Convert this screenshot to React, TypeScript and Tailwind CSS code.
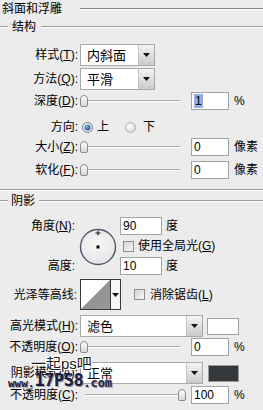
import React from "react";

const U = ({ c }: { c: string }) => <span className="underline underline-offset-[1px]">{c}</span>;

function Label({ children, w = "w-[78px]" }: { children: React.ReactNode; w?: string }) {
  return <div className={`${w} shrink-0 text-right whitespace-nowrap`}>{children}</div>;
}

function Line({ className = "" }: { className?: string }) {
  return <div className={`h-[2px] border-t border-t-[#9a9a9a] border-b border-b-white ${className}`} />;
}

function Arrow() {
  return (
    <svg width="7" height="4" viewBox="0 0 7 4">
      <polygon points="0,0 7,0 3.5,4" fill="#111" />
    </svg>
  );
}

function Select({ w, text }: { w: string; text: string }) {
  return (
    <div className={`flex h-[22px] ${w} bg-white border border-[#a9a9a9]`}>
      <div className="flex-1 flex items-center pl-[6px] text-[13px]">{text}</div>
      <div className="w-[16px] border-l border-l-[#c4c4c4] bg-gradient-to-b from-[#f4f4f4] to-[#cbcbcb] flex items-center justify-center">
        <Arrow />
      </div>
    </div>
  );
}

function Input({ value, w = "w-[38px]", sel = false }: { value: string; w?: string; sel?: boolean }) {
  return (
    <div className={`h-[18px] ${w} bg-white border border-[#a3a3a3] flex items-center pl-[2px] font-['Liberation_Sans',sans-serif] text-[12px]`}>
      {sel ? <span className="bg-[#8fb0e0] px-[1px] leading-[14px]">{value}</span> : <span>{value}</span>}
    </div>
  );
}

function Slider({ left }: { left: number }) {
  return (
    <div className="relative w-[106px] h-[18px] shrink-0">
      <div className="absolute left-[5px] right-[6px] top-[8px] h-[2px] border-t border-t-[#a8a8a8] border-b border-b-white" />
      <div
        className="absolute top-[3px] w-[8px] h-[12px] rounded-t-[4px] rounded-b-[2px] border border-[#8c8c8c] bg-gradient-to-b from-white to-[#d8d8d8]"
        style={{ left }}
      />
    </div>
  );
}

function Radio({ on }: { on: boolean }) {
  return (
    <svg width="11" height="11" viewBox="0 0 11 11">
      <defs>
        <radialGradient id={on ? "rgOn" : "rgOff"} cx="0.4" cy="0.35" r="0.7">
          <stop offset="0" stopColor="#fff" />
          <stop offset="1" stopColor={on ? "#d9d9d9" : "#d4d4d4"} />
        </radialGradient>
        <radialGradient id="rgDot" cx="0.4" cy="0.35" r="0.7">
          <stop offset="0" stopColor="#7fb2e3" />
          <stop offset="1" stopColor="#1d4f86" />
        </radialGradient>
      </defs>
      <circle cx="5.5" cy="5.5" r="5" fill={`url(#${on ? "rgOn" : "rgOff"})`} stroke={on ? "#6f7f8f" : "#b0b0b0"} strokeWidth="1" />
      {on && <circle cx="5.5" cy="5.5" r="3" fill="url(#rgDot)" />}
    </svg>
  );
}

function Checkbox() {
  return <div className="w-[11px] h-[11px] border border-[#8e8e8e] bg-gradient-to-br from-[#d6d6d6] to-[#f6f6f6] shrink-0" />;
}

function Dial() {
  return (
    <svg width="38" height="38" viewBox="0 0 38 38">
      <defs>
        <radialGradient id="dialG" cx="0.45" cy="0.4" r="0.65">
          <stop offset="0" stopColor="#f8f8f8" />
          <stop offset="1" stopColor="#e4e4e4" />
        </radialGradient>
      </defs>
      <circle cx="19" cy="19" r="17.5" fill="url(#dialG)" stroke="#4d566c" strokeWidth="1.4" />
      <line x1="19" y1="2.5" x2="19" y2="7.5" stroke="#111" strokeWidth="1" />
      <line x1="16.5" y1="5" x2="21.5" y2="5" stroke="#111" strokeWidth="1" />
      <rect x="17.5" y="17.5" width="3" height="3" fill="#000" />
    </svg>
  );
}

function Contour() {
  return (
    <div className="flex h-[31px] w-[41px] border border-[#3a3a3a] bg-white">
      <svg width="29" height="29" viewBox="0 0 29 29" className="shrink-0">
        <defs>
          <linearGradient id="ctG" x1="0" y1="0" x2="1" y2="1">
            <stop offset="0" stopColor="#8a8a8a" />
            <stop offset="1" stopColor="#9a9a9a" />
          </linearGradient>
        </defs>
        <rect width="29" height="29" fill="#fff" />
        <polygon points="0,29 29,0 29,29" fill="url(#ctG)" />
      </svg>
      <div className="flex-1 border-l border-l-[#3a3a3a] flex items-center justify-center bg-[#f7f7f7]">
        <Arrow />
      </div>
    </div>
  );
}

export default function App() {
  return (
    <div className="w-[263px] h-[410px] overflow-hidden bg-[#ececec] text-black text-[12px] leading-none font-['Liberation_Sans','Noto_Sans_CJK_SC',sans-serif] flex flex-col">
      {/* title */}
      <div className="h-[18px] flex items-center shrink-0">
        <span className="ml-[2px] text-[12px]">斜面和浮雕</span>
        <div className="flex-1 ml-[18px] h-[2px] border-t border-t-[#858585] border-b border-b-white" />
      </div>

      {/* 结构 header */}
      <div className="mt-[1px] h-[16px] flex items-center shrink-0">
        <Line className="w-[8px]" />
        <span className="ml-[4px]">结构</span>
        <Line className="flex-1 ml-[5px]" />
      </div>

      <div className="mt-[9px] h-[22px] flex items-center gap-[2px] shrink-0">
        <Label>样式(<U c="T" />):</Label>
        <Select w="w-[75px]" text="内斜面" />
      </div>
      <div className="mt-[2px] h-[22px] flex items-center gap-[2px] shrink-0">
        <Label>方法(<U c="Q" />):</Label>
        <Select w="w-[75px]" text="平滑" />
      </div>
      <div className="mt-[2px] h-[18px] flex items-center gap-[2px] shrink-0">
        <Label>深度(<U c="D" />):</Label>
        <Slider left={0} />
        <div className="ml-[3px]"><Input value="1" sel /></div>
        <span className="ml-[3px] font-['Liberation_Sans',sans-serif]">%</span>
      </div>
      <div className="mt-[8px] h-[18px] flex items-center shrink-0">
        <Label>方向:</Label>
        <div className="ml-[4px]"><Radio on /></div>
        <span className="ml-[4px]">上</span>
        <div className="ml-[16px]"><Radio on={false} /></div>
        <span className="ml-[7px]">下</span>
      </div>
      <div className="mt-[2px] h-[18px] flex items-center gap-[2px] shrink-0">
        <Label>大小(<U c="Z" />):</Label>
        <Slider left={0} />
        <div className="ml-[3px]"><Input value="0" /></div>
        <span className="ml-[3px]">像素</span>
      </div>
      <div className="mt-[5px] h-[18px] flex items-center gap-[2px] shrink-0">
        <Label>软化(<U c="F" />):</Label>
        <Slider left={0} />
        <div className="ml-[3px]"><Input value="0" /></div>
        <span className="ml-[3px]">像素</span>
      </div>

      <Line className="mt-[10px] w-full shrink-0" />

      {/* 阴影 header */}
      <div className="mt-[2px] h-[16px] flex items-center shrink-0">
        <Line className="w-[8px]" />
        <span className="ml-[3px]">阴影</span>
        <Line className="flex-1 ml-[4px]" />
      </div>

      {/* angle block */}
      <div className="mt-[8px] h-[58px] flex shrink-0">
        <div className="w-[78px] flex flex-col justify-between pr-[3px] text-right">
          <div className="h-[18px] flex items-center justify-end">角度(<U c="N" />):</div>
          <div className="h-[18px] flex items-center justify-end">高度:</div>
        </div>
        <div className="ml-[1px] pt-[11px]">
          <Dial />
        </div>
        <div className="ml-[3px] flex flex-col">
          <div className="h-[18px] flex items-center">
            <Input value="90" w="w-[42px]" />
            <span className="ml-[4px]">度</span>
          </div>
          <div className="mt-[2px] h-[18px] flex items-center">
            <div className="ml-[3px]"><Checkbox /></div>
            <span className="ml-[4px]">使用全局光(<U c="G" />)</span>
          </div>
          <div className="mt-[2px] h-[18px] flex items-center">
            <Input value="10" w="w-[42px]" />
            <span className="ml-[4px]">度</span>
          </div>
        </div>
      </div>

      {/* contour */}
      <div className="mt-[4px] h-[31px] flex items-center shrink-0">
        <Label w="w-[78px]">
          <span className="pr-[1px]">光泽等高线:</span>
        </Label>
        <div className="ml-[2px]"><Contour /></div>
        <div className="ml-[13px]"><Checkbox /></div>
        <span className="ml-[5px]">消除锯齿(<U c="L" />)</span>
      </div>

      <div className="mt-[5px] h-[22px] flex items-center gap-[2px] shrink-0">
        <Label>高光模式(<U c="H" />):</Label>
        <Select w="w-[123px]" text="滤色" />
        <div className="ml-[2px] w-[32px] h-[17px] bg-white border border-[#a0a0a0]" />
      </div>
      <div className="mt-[1px] h-[18px] flex items-center gap-[2px] shrink-0">
        <Label>不透明度(<U c="O" />):</Label>
        <Slider left={0} />
        <div className="ml-[3px]"><Input value="0" /></div>
        <span className="ml-[3px]">%</span>
      </div>
      <div className="relative mt-[6px] h-[22px] flex items-center gap-[2px] shrink-0">
        <Label>阴影模式(<U c="A" />):</Label>
        <Select w="w-[123px]" text="正常" />
        <div className="ml-[3px] w-[31px] h-[17px] bg-[#35383b] border border-[#9a9a9a]" />
        <div className="absolute left-[31px] top-[-6px] text-[15px] text-[#1b1b1b] [text-shadow:1px_1px_0_#fff,-1px_-1px_0_#fff,1px_-1px_0_#fff,-1px_1px_0_#fff] font-['Liberation_Sans','Noto_Sans_CJK_SC',sans-serif]">
          一起ps吧
        </div>
        <div className="absolute left-[8px] top-[10px] flex items-end text-[#1c1f3e] font-bold font-['DejaVu_Sans_Mono',monospace] [text-shadow:1px_1px_0_#9a9aa8] leading-none">
          <span className="text-[11px]">www.</span>
          <span className="text-[17px] tracking-[-0.5px]">17PS8</span>
          <span className="text-[12px]">.com</span>
        </div>
      </div>
      <div className="mt-[2px] h-[18px] flex items-center gap-[2px] shrink-0">
        <Label>不透明度(<U c="C" />):</Label>
        <Slider left={98} />
        <div className="ml-[3px]"><Input value="100" /></div>
        <span className="ml-[3px]">%</span>
      </div>
    </div>
  );
}
